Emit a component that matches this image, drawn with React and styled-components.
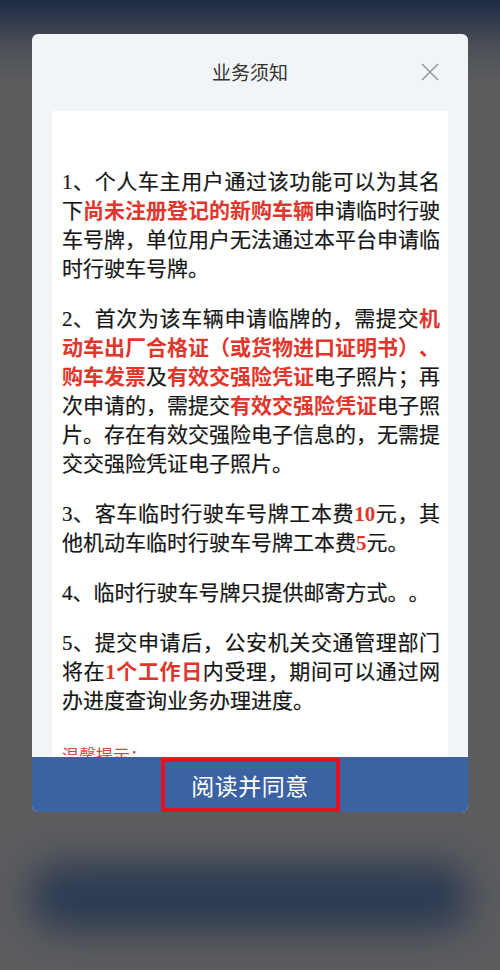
import React from "react";
import styled, { createGlobalStyle } from "styled-components";

const GlobalStyle = createGlobalStyle`
  html, body {
    margin: 0;
    padding: 0;
    background: #5b5c5e;
  }
  body {
    font-family: "Liberation Serif", "Noto Sans CJK SC", serif;
    text-spacing-trim: space-all;
  }
`;

const notices = [
  [
    "1、个人车主用户通过该功能可以为其名下",
    { red: "尚未注册登记的新购车辆" },
    "申请临时行驶车号牌，单位用户无法通过本平台申请临时行驶车号牌。",
  ],
  [
    "2、首次为该车辆申请临牌的，需提交",
    { red: "机动车出厂合格证（或货物进口证明书）、购车发票" },
    "及",
    { red: "有效交强险凭证" },
    "电子照片；再次申请的，需提交",
    { red: "有效交强险凭证" },
    "电子照片。存在有效交强险电子信息的，无需提交交强险凭证电子照片。",
  ],
  [
    "3、客车临时行驶车号牌工本费",
    { red: "10" },
    "元，其他机动车临时行驶车号牌工本费",
    { red: "5" },
    "元。",
  ],
  ["4、临时行驶车号牌只提供邮寄方式。。"],
  [
    "5、提交申请后，公安机关交通管理部门将在",
    { red: "1个工作日" },
    "内受理，期间可以通过网办进度查询业务办理进度。",
  ],
];

const App = () => {
  return (
    <>
      <GlobalStyle />
      <Page>
        <Modal>
          <Header>
            <span />
            <Title>业务须知</Title>
            <CloseButton aria-label="关闭">
              <svg width="18" height="18" viewBox="0 0 18 18">
                <path
                  d="M1 1 L17 17 M17 1 L1 17"
                  stroke="#9a9c9e"
                  strokeWidth="1.6"
                  fill="none"
                />
              </svg>
            </CloseButton>
          </Header>
          <Content>
            {notices.map((parts, i) => (
              <Paragraph key={i}>
                {parts.map((p, j) =>
                  typeof p === "string" ? (
                    <React.Fragment key={j}>{p}</React.Fragment>
                  ) : (
                    <Mark key={j}>{p.red}</Mark>
                  )
                )}
              </Paragraph>
            ))}
            <Tip>温馨提示：</Tip>
          </Content>
          <Footer>
            <AgreeButton>阅读并同意</AgreeButton>
          </Footer>
        </Modal>
        <Blob />
      </Page>
    </>
  );
};

const Page = styled.div`
  min-height: 970px;
  padding-top: 34px;
  box-sizing: border-box;
  display: flex;
  flex-direction: column;
  align-items: center;
  background: linear-gradient(
    180deg,
    #1f2c44 0px,
    #2f3a4c 20px,
    #4b4f56 45px,
    #5b5c5e 80px,
    #5b5c5e 100%
  );
`;

const Modal = styled.div`
  width: 436px;
  background: #f2f5f7;
  border-radius: 6px;
  overflow: hidden;
  display: flex;
  flex-direction: column;
`;

const Header = styled.div`
  height: 77px;
  display: grid;
  grid-template-columns: 60px 1fr 60px;
  align-items: center;
  padding-bottom: 2px;
  box-sizing: border-box;
`;

const Title = styled.h2`
  margin: 0;
  text-align: center;
  font-family: "Noto Sans CJK SC", sans-serif;
  font-size: 19px;
  font-weight: 400;
  color: #333;
`;

const CloseButton = styled.button`
  border: none;
  background: none;
  padding: 0;
  width: 18px;
  height: 18px;
  justify-self: center;
  margin-right: 16px;
  display: flex;
  cursor: pointer;
`;

const Content = styled.div`
  margin: 0 20px;
  height: 646px;
  overflow: hidden;
  background: #fff;
  padding: 57px 8px 0 10px;
  box-sizing: border-box;
`;

const Paragraph = styled.p`
  margin: 0 0 21px;
  font-size: 21px;
  line-height: 29px;
  color: #161616;
  text-align: justify;
  -webkit-text-stroke: 0.2px #161616;
`;

const Mark = styled.span`
  color: #e0362c;
  font-weight: 700;
  -webkit-text-stroke: 0;
`;

const Tip = styled.div`
  margin-top: 27px;
  font-family: "Noto Sans CJK SC", sans-serif;
  font-size: 17px;
  line-height: 24px;
  color: #d9463c;
`;

const Footer = styled.div`
  height: 55px;
  background: #3b63a4;
  display: flex;
  justify-content: center;
  align-items: center;
`;

const AgreeButton = styled.button`
  width: 179px;
  height: 54px;
  box-sizing: border-box;
  border: 4px solid #e3121c;
  background: transparent;
  color: #fff;
  font-family: "Noto Sans CJK SC", sans-serif;
  font-size: 23px;
  letter-spacing: 0.5px;
  cursor: pointer;
`;

const Blob = styled.div`
  margin-top: 52px;
  width: 440px;
  height: 66px;
  border-radius: 40px;
  background: #2c3a52;
  filter: blur(18px);
`;

export default App;
